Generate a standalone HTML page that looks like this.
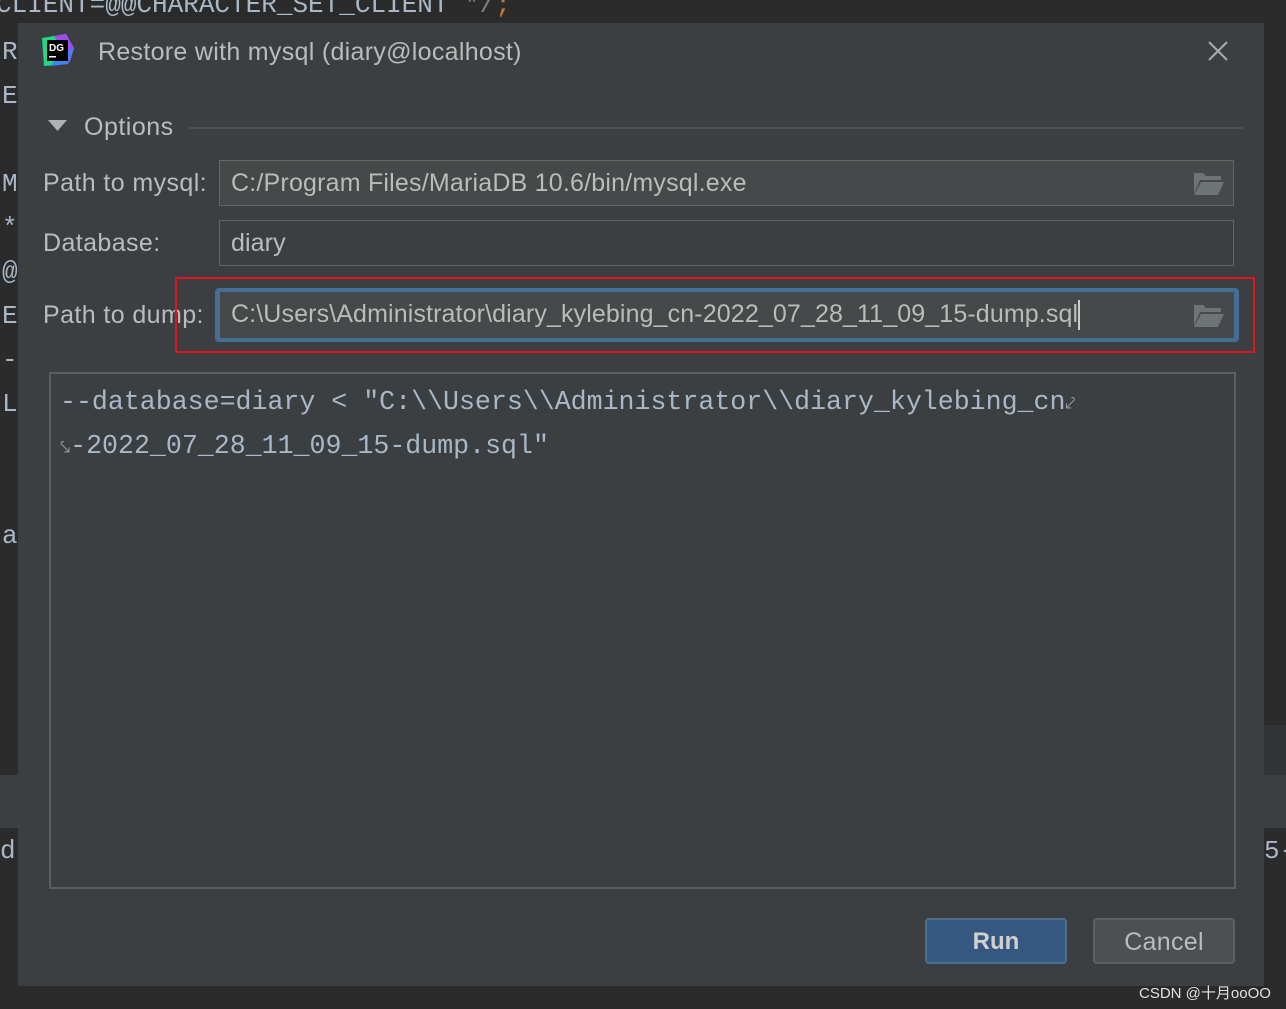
<!DOCTYPE html><html><head><style>
body{margin:0;width:1286px;height:1009px;background:#2b2b2b;position:relative;overflow:hidden;font-family:"Liberation Sans","Noto Sans CJK SC",sans-serif;color:#bbbbbb}
.a{position:absolute}
.mono{font-family:"Liberation Mono","DejaVu Sans Mono",monospace}
.inp{position:absolute;left:219px;width:1015px;height:46px;background:#45494a;border:1px solid #646464;box-sizing:border-box;font-size:25px;letter-spacing:0.1px;line-height:44px;padding-left:11px;color:#bbbbbb}
.lbl{position:absolute;left:43px;font-size:25px;letter-spacing:0.4px}
</style></head><body>
<div class="a mono" style="left:-4px;top:-10px;font-size:26px;color:#a9b7c6;white-space:pre">CLIENT=@@CHARACTER_SET_CLIENT <span style="color:#808080">*/</span><span style="color:#cc7832">;</span></div>
<div class="a mono" style="left:2px;top:30px;font-size:26px;color:#a9b7c6;line-height:44px;white-space:pre">R
E

M
*
@
E
-
L


a</div>
<div class="a" style="left:1264px;top:725px;width:22px;height:50px;background:#313335"></div>
<div class="a" style="left:1264px;top:775px;width:22px;height:53px;background:#3c3f41"></div>
<div class="a" style="left:0;top:775px;width:18px;height:53px;background:#3c3f41"></div>
<div class="a mono" style="left:0;top:836px;font-size:26px;color:#a9b7c6">d</div>
<div class="a mono" style="left:1264px;top:836px;font-size:26px;color:#a9b7c6">5-</div>
<div class="a" style="left:18px;top:23px;width:1246px;height:963px;background:#3c3f41"></div>
<svg class="a" style="left:40px;top:34px" width="36" height="34" viewBox="0 0 36 34"><polygon points="2,4 26,0 34,14 28,30 4,32" fill="#21d789"/><polygon points="14,2 26,0 34,14 30,28" fill="#9c4cf0"/><polygon points="20,20 34,14 28,30 10,32" fill="#4083f2"/><rect x="7" y="6" width="21" height="21" fill="#000"/><text x="9" y="17" font-size="10" font-weight="bold" fill="#fff" font-family="Liberation Sans">DG</text><rect x="9" y="22" width="7" height="1.5" fill="#fff"/></svg>
<div class="a" style="left:98px;top:38px;font-size:25px;letter-spacing:0.3px">Restore with mysql (diary@localhost)</div>
<svg class="a" style="left:1207px;top:40px" width="22" height="22"><path d="M2 2L20 20M20 2L2 20" stroke="#aaa" stroke-width="2"/></svg>
<svg class="a" style="left:48px;top:120px" width="20" height="12"><polygon points="0,0 19,0 9.5,11" fill="#afb1b3"/></svg>
<div class="a" style="left:84px;top:113px;font-size:25px;letter-spacing:0.5px">Options</div>
<div class="a" style="left:189px;top:127px;width:1054px;height:2px;background:#515151"></div>
<div class="lbl" style="top:169px">Path to mysql:</div>
<div class="inp" style="top:160px;letter-spacing:0.2px">C:/Program Files/MariaDB 10.6/bin/mysql.exe</div>
<div class="lbl" style="top:229px">Database:</div>
<div class="inp" style="top:220px;background:#3c3f41">diary</div>
<div class="lbl" style="top:301px">Path to dump:</div>
<div class="a" style="left:215px;top:288px;width:1024px;height:54px;border-radius:4px;background:#466d94"></div>
<div class="inp" style="top:292px;left:220px;width:1014px;border:none;height:46px;letter-spacing:0.12px">C:\Users\Administrator\diary_kylebing_cn-2022_07_28_11_09_15-dump.sql<span style="display:inline-block;width:2px;height:30px;background:#ccc;vertical-align:middle"></span></div>
<svg class="a" style="left:1193px;top:172px" width="32" height="24"><path d="M1 1h9l3 3h15v4H7L1 22z" fill="#6e7375"/><path d="M8 10h23l-6 13H1z" fill="#6e7375"/></svg>
<svg class="a" style="left:1193px;top:304px" width="32" height="24"><path d="M1 1h9l3 3h15v4H7L1 22z" fill="#6e7375"/><path d="M8 10h23l-6 13H1z" fill="#6e7375"/></svg>
<div class="a" style="left:175px;top:277px;width:1080px;height:76px;border:2px solid #e0151e;box-sizing:border-box"></div>
<div class="a" style="left:49px;top:372px;width:1187px;height:517px;border:2px solid #5b5d5f;box-sizing:border-box"></div>
<div class="a mono" style="left:60px;top:380px;font-size:26.6px;line-height:44px;color:#a9b7c6;white-space:pre">--database=diary &lt; "C:\\Users\\Administrator\\diary_kylebing_cn<span style="font-size:18px;line-height:0;color:#999">⤦</span>
<span style="font-size:18px;line-height:0;color:#999">⤥</span>-2022_07_28_11_09_15-dump.sql"</div>
<div class="a" style="left:925px;top:918px;width:142px;height:46px;background:#365880;border:2px solid #4c708c;box-sizing:border-box;border-radius:4px;text-align:center;line-height:44px;font-size:24px;font-weight:bold;color:#d0d0d0">Run</div>
<div class="a" style="left:1093px;top:918px;width:142px;height:46px;background:#4c5052;border:2px solid #5e6060;box-sizing:border-box;border-radius:4px;text-align:center;line-height:44px;font-size:25px;letter-spacing:0.3px;color:#bbbbbb">Cancel</div>
<div class="a" style="left:1139px;top:982px;font-size:15px;color:#e0e0e0">CSDN @十月ooOO</div>
</body></html>
